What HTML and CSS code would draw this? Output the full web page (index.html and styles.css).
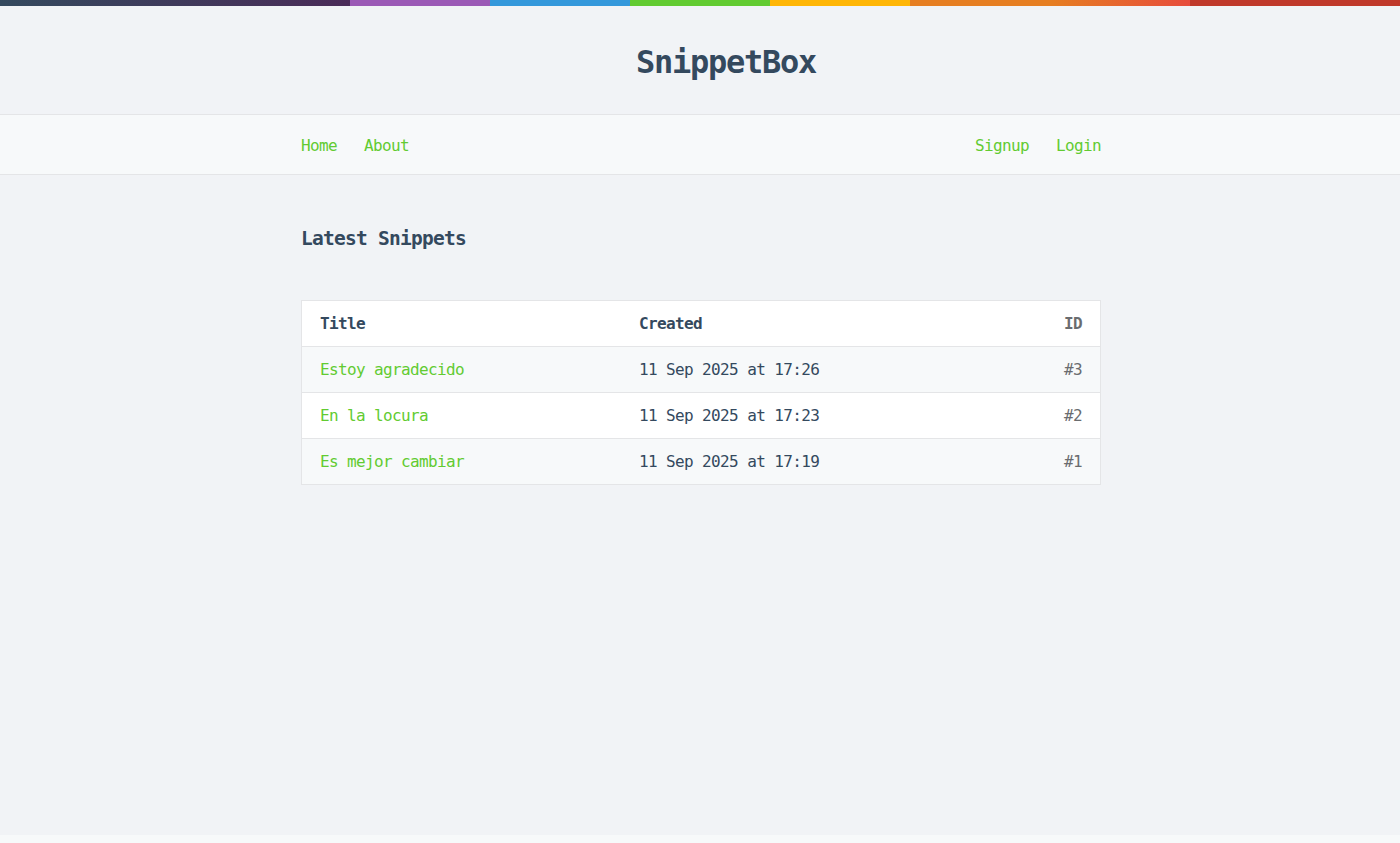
FILE: index.html
```html
<!DOCTYPE html>
<html lang="en">
<head>
<meta charset="utf-8">
<title>Home - Snippetbox</title>
<link rel="stylesheet" href="styles.css">
</head>
<body>
<header class="site-header">
  <h1 class="brand"><a href="#">SnippetBox</a></h1>
</header>
<nav class="site-nav">
  <div class="nav-left">
    <a href="#">Home</a>
    <a href="#">About</a>
  </div>
  <div class="nav-right">
    <a href="#">Signup</a>
    <a href="#">Login</a>
  </div>
</nav>
<main class="content">
  <h2 class="page-title">Latest Snippets</h2>
  <table class="snippets">
    <tr>
      <th class="col-title">Title</th>
      <th class="col-created">Created</th>
      <th class="col-id">ID</th>
    </tr>
    <tr>
      <td><a href="#">Estoy agradecido</a></td>
      <td>11 Sep 2025 at 17:26</td>
      <td class="col-id">#3</td>
    </tr>
    <tr>
      <td><a href="#">En la locura</a></td>
      <td>11 Sep 2025 at 17:23</td>
      <td class="col-id">#2</td>
    </tr>
    <tr>
      <td><a href="#">Es mejor cambiar</a></td>
      <td>11 Sep 2025 at 17:19</td>
      <td class="col-id">#1</td>
    </tr>
  </table>
</main>
<footer class="site-footer"></footer>
</body>
</html>
```
FILE: styles.css
```css
* {
  box-sizing: border-box;
  margin: 0;
  padding: 0;
}

html, body {
  background-color: #F1F3F6;
}

body {
  font-family: "DejaVu Sans Mono", "Liberation Mono", monospace;
  font-size: 16px;
  letter-spacing: -0.63px;
  line-height: 27px;
  color: #34495E;
  overflow: hidden;
  height: 843px;
}

a {
  color: #62CB31;
  text-decoration: none;
}

.site-header {
  background-image: linear-gradient(to right,
    #34495e 0%, #4a2b58 25%,
    #9b59b6 25%, #9b59b6 35%,
    #3498db 35%, #3498db 45%,
    #62cb31 45%, #62cb31 55%,
    #ffb606 55%, #ffb606 65%,
    #e67e22 65%, #e67e22 75%,
    #e74c3c 85%,
    #c0392b 85%, #c0392b 100%);
  background-size: 100% 6px;
  background-repeat: no-repeat;
  border-bottom: 1px solid #E4E5E7;
  padding: 35px 299px 25px 301px;
  text-align: center;
}

.brand {
  font-size: 32px;
  letter-spacing: -1.26px;
  line-height: 54px;
  font-weight: bold;
}

.brand a {
  color: #34495E;
  padding-left: 50px;
}

.site-nav {
  height: 60px;
  background: #F7F9FA;
  border-bottom: 1px solid #E4E5E7;
  padding: 17px 299px 15px 301px;
  display: flex;
  justify-content: space-between;
}

.nav-left {
  display: flex;
  gap: 27px;
}

.nav-right {
  display: flex;
  gap: 27px;
}

.content {
  margin: 0 299px 0 301px;
  padding: 47px 0 54px;
  min-height: 660px;
}

.page-title {
  font-size: 19.5px;
  letter-spacing: -0.74px;
  line-height: 33px;
  margin-bottom: 45px;
}

.snippets {
  width: 800px;
  background: #ffffff;
  border: 1px solid #E4E5E7;
  border-collapse: collapse;
  table-layout: fixed;
}

.snippets tr {
  border-bottom: 1px solid #E4E5E7;
}

.snippets tr:nth-child(2n) {
  background-color: #F7F9FA;
}

.snippets th,
.snippets td {
  text-align: left;
  padding: 9px 18px;
  height: 46px;
}

.snippets th {
  font-weight: bold;
}

.col-title {
  width: 40%;
}

.col-created {
  width: 40%;
}

.snippets .col-id {
  width: 20%;
  text-align: right;
  color: #6A6C6F;
}

.site-footer {
  background: #F7F9FA;
  height: 60px;
}
```
